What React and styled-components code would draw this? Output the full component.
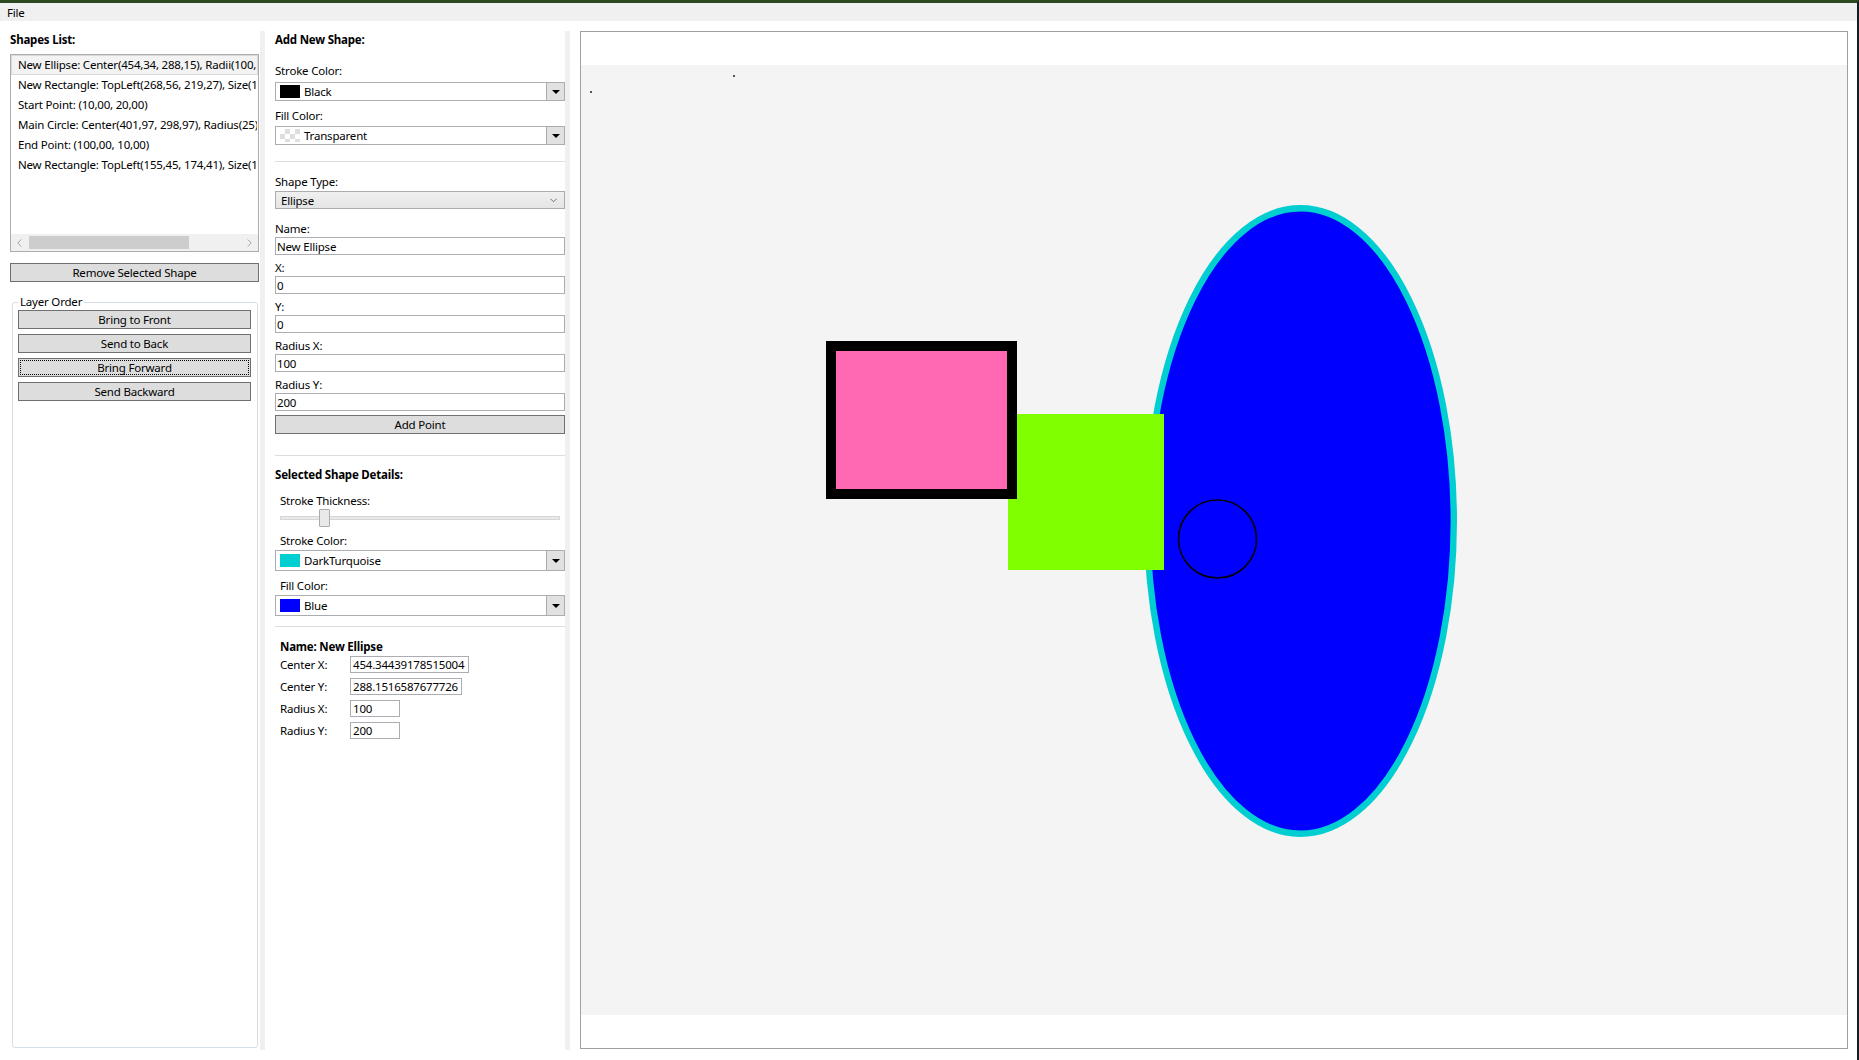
import React from "react";
import styled, { createGlobalStyle } from "styled-components";

const GlobalStyle = createGlobalStyle`
  html, body { margin: 0; padding: 0; background: #ffffff; }
  body {
    font-family: "Noto Sans", "Open Sans", sans-serif;
    font-size: 11.5px;
    letter-spacing: -0.2px;
    color: #000;
  }
  * { box-sizing: border-box; }
`;

const Window = styled.div`
  width: 1859px;
  height: 1060px;
  display: flex;
  flex-direction: column;
  background: #ffffff;
  border-top: 3px solid #2c4a20;
  border-right: 2px solid #161b21;
  overflow: hidden;
`;

const MenuBar = styled.div`
  height: 18px;
  background: #f0f0f0;
  display: flex;
  align-items: center;
  padding: 1px 0 0 7px;
`;

const MenuItem = styled.span`
  line-height: 16px;
`;

const Main = styled.div`
  flex: 1;
  display: grid;
  grid-template-columns: 260px 5px 300px 5px 1fr;
  padding: 10px 0 10px 0;
  min-height: 0;
`;

const Splitter = styled.div`
  background: #f0f0f0;
`;

const LeftPane = styled.div`
  display: flex;
  flex-direction: column;
  padding: 0 1px 0 10px;
  min-height: 0;
`;

const Heading = styled.div`
  font-weight: 700;
  line-height: 16px;
  height: 16px;
  margin-top: 1px;
  white-space: nowrap;
`;

const ListBox = styled.div`
  margin-top: 6px;
  height: 198px;
  border: 1px solid #abadb3;
  display: flex;
  flex-direction: column;
  overflow: hidden;
`;

const ListItems = styled.div`
  flex: 1;
  overflow: hidden;
`;

const ListItem = styled.div`
  height: 20px;
  line-height: 18px;
  padding-left: 6px;
  white-space: nowrap;
  overflow: hidden;
  border: 1px solid ${(p) => (p.$selected ? "#dadada" : "transparent")};
  background: ${(p) => (p.$selected ? "#f3f3f3" : "transparent")};
`;

const HScroll = styled.div`
  height: 17px;
  background: #f0f0f0;
  display: flex;
  align-items: center;
`;

const ScrollArrow = styled.div`
  width: 17px;
  height: 17px;
  display: flex;
  align-items: center;
  justify-content: center;
`;

const ScrollTrack = styled.div`
  flex: 1;
  height: 13px;
`;

const ScrollThumb = styled.div`
  height: 13px;
  width: 160px;
  margin-left: 1px;
  background: #cdcdcd;
`;

const Button = styled.div`
  height: 19px;
  border: 1px solid #707070;
  background: #dddddd;
  text-align: center;
  line-height: 17px;
  margin-top: ${(p) => p.$mt || 0}px;
  outline: ${(p) => (p.$focused ? "1px dotted #000" : "none")};
  outline-offset: -3px;
  white-space: nowrap;
`;

const GroupBox = styled.fieldset`
  flex: 1;
  margin: 12px 1px 2px 2px;
  border: 1px solid #d5dfe5;
  border-radius: 3px;
  padding: 0 6px 0 5px;
  display: flex;
  flex-direction: column;
  gap: 5px;
  min-width: 0;
`;

const Legend = styled.legend`
  padding: 0 2px;
  line-height: 16px;
`;

const MiddlePane = styled.div`
  display: flex;
  flex-direction: column;
  padding-left: 10px;
`;

const Label = styled.div`
  line-height: 16px;
  height: 16px;
  margin-top: ${(p) => p.$mt || 0}px;
  margin-bottom: ${(p) => p.$mb || 0}px;
  padding-left: ${(p) => p.$indent || 0}px;
  font-weight: ${(p) => (p.$bold ? 700 : 400)};
  white-space: nowrap;
`;

const ColorCombo = styled.div`
  height: ${(p) => p.$h}px;
  border: 1px solid #abadb3;
  background: #ffffff;
  display: flex;
  align-items: center;
`;

const Swatch = styled.div`
  width: 20px;
  height: 13px;
  margin-left: 4px;
  background: ${(p) => p.$color};
  ${(p) =>
    p.$checker
      ? `background-color: #ffffff;
         background-image: linear-gradient(45deg, #dedede 25%, transparent 25%, transparent 75%, #dedede 75%),
                           linear-gradient(45deg, #dedede 25%, transparent 25%, transparent 75%, #dedede 75%);
         background-size: 10px 10px;
         background-position: 0 0, 5px 5px;`
      : ""}
`;

const ComboText = styled.span`
  margin-left: 4px;
  line-height: 16px;
`;

const DropButton = styled.div`
  margin-left: auto;
  width: 18px;
  align-self: stretch;
  background: #e1e1e1;
  border-left: 1px solid #acacac;
  display: flex;
  align-items: center;
  justify-content: center;
`;

const Triangle = styled.div`
  width: 0;
  height: 0;
  border-left: 4px solid transparent;
  border-right: 4px solid transparent;
  border-top: 4px solid #000;
`;

const Separator = styled.div`
  height: 1px;
  background: #dcdcdc;
  margin-top: ${(p) => p.$mt || 0}px;
`;

const ShapeCombo = styled.div`
  height: 18px;
  border: 1px solid #acacac;
  background: linear-gradient(#f0f0f0, #e5e5e5);
  display: flex;
  align-items: center;
  padding: 0 7px 0 5px;
  justify-content: space-between;
`;

const TextBox = styled.input`
  display: block;
  width: 100%;
  height: 18px;
  border: 1px solid #abadb3;
  padding: 0 1px;
  margin: 0;
  font-family: inherit;
  font-size: inherit;
  letter-spacing: inherit;
  line-height: 16px;
  color: #000;
  background: #fff;
  outline: none;
`;

const Slider = styled.div`
  position: relative;
  height: 18px;
  margin: 0 5px;
  display: flex;
  align-items: center;
`;

const SliderTrack = styled.div`
  flex: 1;
  height: 4px;
  background: #e7eaea;
  border: 1px solid #d6d6d6;
`;

const SliderThumb = styled.div`
  position: absolute;
  top: 0;
  left: 39px;
  width: 11px;
  height: 18px;
  background: #e9e9e9;
  border: 1px solid #acacac;
  border-radius: 1px;
`;

const DetailRow = styled.div`
  display: flex;
  align-items: center;
  height: 17px;
  padding-left: 5px;
  margin-top: ${(p) => p.$mt || 0}px;
`;

const DetailLabel = styled.span`
  width: 70px;
  line-height: 16px;
  white-space: nowrap;
`;

const DetailBox = styled.div`
  width: ${(p) => p.$w}px;
  height: 17px;
  border: 1px solid #abadb3;
  padding-left: 2px;
  line-height: 15px;
  white-space: nowrap;
  overflow: hidden;
`;

const RightPane = styled.div`
  padding: 0 9px 0 10px;
  display: flex;
  flex-direction: column;
  min-width: 0;
`;

const Canvas = styled.div`
  flex: 1;
  margin-bottom: 1px;
  border: 1px solid #a0a0a0;
  background: #ffffff;
  padding: 33px 0;
  display: flex;
  flex-direction: column;
  position: relative;
  overflow: hidden;
`;

const CanvasSurface = styled.div`
  flex: 1;
  background: #f4f4f4;
`;

const ShapesLayer = styled.svg`
  position: absolute;
  top: 0;
  left: 0;
`;

const Chevron = () => (
  <svg width="7" height="5" viewBox="0 0 7 5">
    <path d="M0.5 0.8 L3.5 3.8 L6.5 0.8" fill="none" stroke="#707070" strokeWidth="1" />
  </svg>
);

const ArrowLeft = () => (
  <svg width="5" height="8" viewBox="0 0 5 8">
    <path d="M4.2 0.5 L0.8 4 L4.2 7.5" fill="none" stroke="#a3a3a3" strokeWidth="1" />
  </svg>
);

const ArrowRight = () => (
  <svg width="5" height="8" viewBox="0 0 5 8">
    <path d="M0.8 0.5 L4.2 4 L0.8 7.5" fill="none" stroke="#a3a3a3" strokeWidth="1" />
  </svg>
);

const shapes = [
  "New Ellipse: Center(454,34, 288,15), Radii(100, 200)",
  "New Rectangle: TopLeft(268,56, 219,27), Size(100, 100)",
  "Start Point: (10,00, 20,00)",
  "Main Circle: Center(401,97, 298,97), Radius(25)",
  "End Point: (100,00, 10,00)",
  "New Rectangle: TopLeft(155,45, 174,41), Size(120, 100)",
];

const ColorPicker = ({ h, color, checker, name }) => (
  <ColorCombo $h={h}>
    <Swatch $color={color} $checker={checker} />
    <ComboText>{name}</ComboText>
    <DropButton>
      <Triangle />
    </DropButton>
  </ColorCombo>
);

export default function App() {
  return (
    <>
      <GlobalStyle />
      <Window>
        <MenuBar>
          <MenuItem>File</MenuItem>
        </MenuBar>
        <Main>
          <LeftPane>
            <Heading>Shapes List:</Heading>
            <ListBox>
              <ListItems>
                {shapes.map((s, i) => (
                  <ListItem key={i} $selected={i === 0}>
                    {s}
                  </ListItem>
                ))}
              </ListItems>
              <HScroll>
                <ScrollArrow>
                  <ArrowLeft />
                </ScrollArrow>
                <ScrollTrack>
                  <ScrollThumb />
                </ScrollTrack>
                <ScrollArrow>
                  <ArrowRight />
                </ScrollArrow>
              </HScroll>
            </ListBox>
            <Button $mt={11}>Remove Selected Shape</Button>
            <GroupBox>
              <Legend>Layer Order</Legend>
              <Button>Bring to Front</Button>
              <Button>Send to Back</Button>
              <Button $focused>Bring Forward</Button>
              <Button>Send Backward</Button>
            </GroupBox>
          </LeftPane>
          <Splitter />
          <MiddlePane>
            <Heading>Add New Shape:</Heading>
            <Label $mt={15} $mb={3}>Stroke Color:</Label>
            <ColorPicker h={19} color="#000000" name="Black" />
            <Label $mt={7} $mb={2}>Fill Color:</Label>
            <ColorPicker h={19} checker name="Transparent" />
            <Separator $mt={16} />
            <Label $mt={12} $mb={1}>Shape Type:</Label>
            <ShapeCombo>
              <span>Ellipse</span>
              <Chevron />
            </ShapeCombo>
            <Label $mt={12}>Name:</Label>
            <TextBox readOnly value="New Ellipse" />
            <Label $mt={5}>X:</Label>
            <TextBox readOnly value="0" />
            <Label $mt={5}>Y:</Label>
            <TextBox readOnly value="0" />
            <Label $mt={5}>Radius X:</Label>
            <TextBox readOnly value="100" />
            <Label $mt={5}>Radius Y:</Label>
            <TextBox readOnly value="200" />
            <Button $mt={4}>Add Point</Button>
            <Separator $mt={21} />
            <Label $mt={11} $bold>Selected Shape Details:</Label>
            <Label $mt={10} $indent={5}>Stroke Thickness:</Label>
            <Slider>
              <SliderTrack />
              <SliderThumb />
            </Slider>
            <Label $mt={6} $mb={1} $indent={5}>Stroke Color:</Label>
            <ColorPicker h={21} color="#00ced1" name="DarkTurquoise" />
            <Label $mt={7} $mb={1} $indent={5}>Fill Color:</Label>
            <ColorPicker h={21} color="#0000ff" name="Blue" />
            <Separator $mt={10} />
            <Label $mt={12} $bold $indent={5}>Name: New Ellipse</Label>
            <DetailRow $mt={1}>
              <DetailLabel>Center X:</DetailLabel>
              <DetailBox $w={119}>454.34439178515004</DetailBox>
            </DetailRow>
            <DetailRow $mt={5}>
              <DetailLabel>Center Y:</DetailLabel>
              <DetailBox $w={112}>288.1516587677726</DetailBox>
            </DetailRow>
            <DetailRow $mt={5}>
              <DetailLabel>Radius X:</DetailLabel>
              <DetailBox $w={50}>100</DetailBox>
            </DetailRow>
            <DetailRow $mt={5}>
              <DetailLabel>Radius Y:</DetailLabel>
              <DetailBox $w={50}>200</DetailBox>
            </DetailRow>
          </MiddlePane>
          <Splitter />
          <RightPane>
            <Canvas>
              <CanvasSurface />
              <ShapesLayer width="1266" height="1016" viewBox="581 32 1266 1016">
                <ellipse cx="1300.5" cy="521" rx="153.3" ry="312.8" fill="#0000ff" stroke="#00ced1" strokeWidth="6.4" />
                <rect x="1008" y="414" width="156" height="156" fill="#7fff00" />
                <rect x="590" y="91" width="2" height="2" fill="#555555" />
                <rect x="733" y="75" width="2" height="2" fill="#555555" />
                <circle cx="1217.5" cy="539" r="39" fill="none" stroke="#000000" strokeWidth="1.6" />
                <rect x="831" y="346" width="181" height="148" fill="#ff69b4" stroke="#000000" strokeWidth="10" />
              </ShapesLayer>
            </Canvas>
          </RightPane>
        </Main>
      </Window>
    </>
  );
}
